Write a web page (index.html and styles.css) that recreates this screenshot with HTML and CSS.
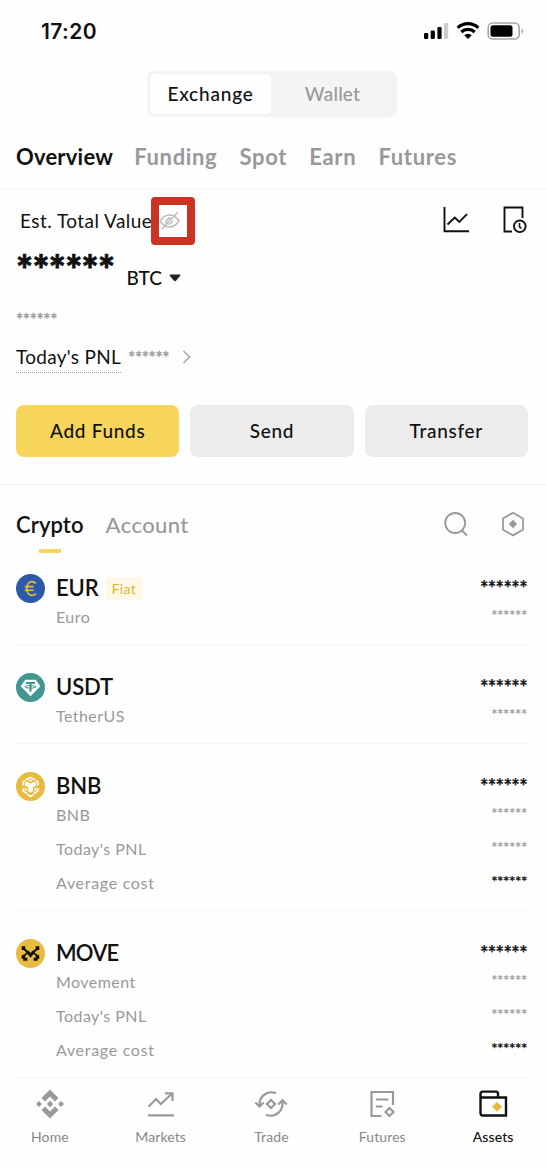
FILE: index.html
```html
<!DOCTYPE html>
<html lang="en">
<head>
<meta charset="utf-8">
<title>Assets</title>
<link rel="stylesheet" href="styles.css">
</head>
<body>
<div class="app">
  <header class="status">
    <span class="time">17:20</span>
    <svg class="status-icons" width="102" height="22" viewBox="0 0 102 22">
      <rect x="2" y="13" width="4.200" height="6" rx="1.200"/><rect x="8.700" y="10.500" width="4.200" height="8.500" rx="1.200"/><rect x="15.400" y="7" width="4.200" height="12" rx="1.200"/><rect x="22" y="3" width="4.200" height="16" rx="1.200" fill="#ccc"/>
      <path d="M35.700 7.800a15 15 0 0 1 20.600 0M39.300 12a9.800 9.800 0 0 1 13.400 0" fill="none" stroke="#000" stroke-width="3.200"/>
      <path d="M42.200 15.300a5.500 5.500 0 0 1 7.600 0L46 19z"/>
      <rect x="66.200" y="3" width="31" height="16" rx="4.500" fill="none" stroke="#a6a6a6" stroke-width="1.600"/>
      <rect x="68.500" y="5.300" width="22" height="11.500" rx="2.500"/><path d="M99.500 8.300q3.500 2.800 0 5.600z" fill="#a6a6a6"/>
    </svg>
  </header>

  <div class="segment">
    <span class="seg active">Exchange</span>
    <span class="seg wallet">Wallet</span>
  </div>

  <nav class="tabs">
    <span class="tab active">Overview</span>
    <span class="tab">Funding</span>
    <span class="tab">Spot</span>
    <span class="tab">Earn</span>
    <span class="tab">Futures</span>
  </nav>

  <section class="summary">
    <div class="est">
      <span class="est-label">Est. Total Value</span>
      <span class="eye"><svg width="22" height="20" viewBox="0 0 22 20" fill="none" stroke="#bcbcbc" stroke-width="1.500"><path d="M1 10Q5 4 10.500 4T20 10Q16 16 10.500 16T1 10zM3 18 18.500 1.500M7 12.500Q7 7.500 12 7M13.500 9.500q-.5 3.500-4 3.500"/></svg></span>
      <span class="tools">
        <svg width="28" height="28" viewBox="0 0 28 28" fill="none" stroke="#111" stroke-width="1.900"><path d="M2.500 1v24.300H27M5.500 18.500l7.300-7 4.500 4.500 7.700-7.800"/></svg>
        <svg width="26" height="28" viewBox="0 0 26 28" fill="none" stroke="#111" stroke-width="1.900"><path d="M10 25.500H2.500V1.500H20.500v10.500"/><circle cx="17.800" cy="20.300" r="5.800"/><path d="M17.500 17v3.800l2 1.500" stroke-width="1.600"/></svg>
      </span>
    </div>
    <div class="balance">
      <span class="stars xl">******</span>
      <span class="btc">BTC</span>
      <svg width="12" height="8" viewBox="0 0 12 8"><path d="M1 .5h10q.7.500.2 1.200L7 6.800q-1 .9-2 0L.8 1.700Q.3 1 1 .5z" fill="#222"/></svg>
    </div>
    <div class="fiat-line"><span class="stars md">******</span></div>
    <div class="pnl">
      <span class="pnl-label">Today's PNL</span>
      <span class="stars md">******</span>
      <svg width="10" height="14" viewBox="0 0 10 14" fill="none" stroke="#aaa" stroke-width="1.700"><path d="m1.500 1 6 6-6 6"/></svg>
    </div>
    <div class="actions">
      <button class="btn primary">Add Funds</button>
      <button class="btn">Send</button>
      <button class="btn">Transfer</button>
    </div>
  </section>

  <section class="list-head">
    <span class="lt active">Crypto</span>
    <span class="lt account">Account</span>
    <span class="list-tools">
      <svg width="26" height="26" viewBox="0 0 26 26" fill="none" stroke="#999" stroke-width="1.800"><circle cx="12.200" cy="12" r="10"/><path d="m18.500 19 5.500 5.500"/></svg>
      <svg width="26" height="26" viewBox="0 0 26 26" fill="none" stroke="#999" stroke-width="1.800"><path d="m13 1.800 10 5.700v11.200l-10 5.700-10-5.700V7.500z"/><path d="m13 8.800 4.200 4.200-4.200 4.200L8.800 13z" fill="#999" stroke="none"/></svg>
    </span>
  </section>

  <main class="coins">
    <article class="coin">
      <svg class="logo" width="29" height="29" viewBox="0 0 28 28"><circle cx="14" cy="14" r="14" fill="#2d5aa8"/><path d="M19.300 9C15 5.500 10.500 8 10.500 14s4.500 8.500 8.800 5M8.500 12.200h8.500M8.500 15.700h8.500" fill="none" stroke="#e9b93c" stroke-width="1.600"/></svg>
      <div class="rows">
        <div class="row name"><span>EUR</span><span class="tag">Fiat</span><span class="stars lg">******</span></div>
        <div class="row sub"><span>Euro</span><span class="stars sm">******</span></div>
      </div>
    </article>
    <article class="coin">
      <svg class="logo" width="29" height="29" viewBox="0 0 28 28"><circle cx="14" cy="14" r="14" fill="#429692"/><path d="M9 6.500h10l4.500 6.300L14 22.500 4.500 12.800z" fill="#fff"/><path d="M9.500 9.700h9M14 9.500v8.500" stroke="#429692" stroke-width="2"/><ellipse cx="14" cy="13.300" rx="5" ry="1.200" fill="none" stroke="#429692"/></svg>
      <div class="rows">
        <div class="row name"><span>USDT</span><span class="stars lg">******</span></div>
        <div class="row sub"><span>TetherUS</span><span class="stars sm">******</span></div>
      </div>
    </article>
    <article class="coin">
      <svg class="logo" width="29" height="29" viewBox="0 0 28 28"><circle cx="14" cy="14" r="14" fill="#e8ba40"/><path d="m9.500 7.700 4.500-2.500 4.500 2.500M7 13V9.500l2-1M21 13V9.500l-2-1M7 15.500v3l4 2.500M21 15.500v3L17 21M11 22l3 1.500 3-1.500" fill="none" stroke="#fff" stroke-width="1.600"/><path d="m8.500 10.500 2.200-1.200L14 11l3.300-1.700 2.200 1.200v2.300L16.300 15v3.700L14 20l-2.300-1.300V15l-3.200-2.200zM12 8.300l2-1.100 2 1.100-2 1.100zM8.500 15l1.700 1v2.500l-1.700-1zM19.500 15l-1.700 1v2.500l1.700-1z" fill="#fff"/></svg>
      <div class="rows">
        <div class="row name"><span>BNB</span><span class="stars lg">******</span></div>
        <div class="row sub"><span>BNB</span><span class="stars sm">******</span></div>
        <div class="row extra"><span>Today's PNL</span><span class="stars sm">******</span></div>
        <div class="row extra"><span class="cost">Average cost</span><span class="stars sm dark">******</span></div>
      </div>
    </article>
    <article class="coin">
      <svg class="logo" width="29" height="29" viewBox="0 0 28 28"><circle cx="14" cy="14" r="14" fill="#e8ba40"/><path d="M5.500 7H9v2.300l2.200 2h1L14 13.500l1.800-2.200h1l2.200-2V7h3.500v3.500h-2L18 13l1.500 1.500 3 1.500v3H21v2h-4v-3h2v-2l-2-1.500-3 3.500-3-3.500L9 16v2h2v3H7v-2H5.500v-3l3-1.500L10 13l-2.500-2.500h-2z" fill="#111"/></svg>
      <div class="rows">
        <div class="row name move"><span>MOVE</span><span class="stars lg">******</span></div>
        <div class="row sub"><span>Movement</span><span class="stars sm">******</span></div>
        <div class="row extra"><span>Today's PNL</span><span class="stars sm">******</span></div>
        <div class="row extra"><span class="cost">Average cost</span><span class="stars sm dark">******</span></div>
      </div>
    </article>
  </main>

  <footer class="nav">
    <span class="item">
      <svg width="30" height="30" viewBox="0 0 30 30" fill="#999"><path d="m15 .5 8.500 8.500-3.500 3.500-5-5-5 5L6.500 9zM15 29.500l8.500-8.500-3.500-3.500-5 5-5-5L6.500 21zM15 11.800l3.200 3.200-3.200 3.200-3.200-3.200zM4 12l3 3-3 3-3-3zM26 12l3 3-3 3-3-3z"/></svg>
      <span class="cap">Home</span>
    </span>
    <span class="item">
      <svg width="30" height="30" viewBox="0 0 30 30" fill="none" stroke="#999" stroke-width="2.200"><path d="m2.500 17.500 7.700-7.500 4.500 5L26 4.800M19 4.300h7.500V12M2 26.300h26"/></svg>
      <span class="cap">Markets</span>
    </span>
    <span class="item">
      <svg class="wide" width="34" height="30" viewBox="0 0 34 30" fill="none" stroke="#999" stroke-width="2.200"><path d="M22 4.200A12 12 0 0 0 5.500 15v2.500M1.300 13.500l4.200 4 4.200-4M12 25.800A12 12 0 0 0 28.500 15v-3M24.300 15.500l4.200-4.200 4.200 4.200M17 11l4 4-4 4-4-4z"/></svg>
      <span class="cap">Trade</span>
    </span>
    <span class="item">
      <svg width="30" height="30" viewBox="0 0 30 30" fill="none" stroke="#999" stroke-width="2.200"><path d="M14.500 27H4.500V3H26v13M9 10.500h12.500M9 17.500h6.500M22.500 19l4 4-4 4-4-4z"/></svg>
      <span class="cap">Futures</span>
    </span>
    <span class="item on">
      <svg width="30" height="30" viewBox="0 0 30 30" fill="none" stroke="#111" stroke-width="2.400"><path d="M20 8V4.500Q20 2.600 18 2.600H5Q2.500 2.600 2.500 5v19q0 2.500 2.500 2.500h23V8.500H5Q2.500 8.500 2.500 6"/><path d="m19 12.700 5 5-5 5-5-5z" fill="#eabb3b" stroke="none"/></svg>
      <span class="cap">Assets</span>
    </span>
  </footer>
</div>
</body>
</html>
```
FILE: styles.css
```css
* { box-sizing: border-box; }
body { margin: 0; background: #fefefe; font-family: Lato, "Liberation Sans", sans-serif; color: #111; }
.app { width: 546px; height: 1168px; overflow: hidden; }
svg { display: block; flex: none; }
span { white-space: nowrap; }

.status { display: flex; justify-content: space-between; align-items: center; height: 62px; padding: 0 22px 0 41px; }
.time { font: 600 21px Inter, sans-serif; letter-spacing: .4px; }

.segment { display: flex; width: 250px; height: 46px; margin: 9px 0 0 147px; padding: 3px; border-radius: 7px; background: #f4f4f4; font-size: 19px; font-weight: 500; color: #999; }
.seg { flex: 1; display: flex; align-items: center; justify-content: center; padding-bottom: 1px; letter-spacing: .2px; }
.seg.active { flex: 0 0 121px; border-radius: 5px; background: #fefefe; color: #111; letter-spacing: .8px; }

.tabs { display: flex; align-items: center; gap: 22.200px; height: 72px; padding: 7px 16px 0; border-bottom: 1px solid #f4f4f4; font-size: 22px; font-weight: 700; color: #999; letter-spacing: .65px; }
.tab.active { margin-right: -1px; color: #111; letter-spacing: .2px; }

.summary { height: 296px; padding: 8px 18px 0 16px; border-bottom: 1px solid #f1f1f1; }
.est { display: flex; align-items: center; height: 48px; }
.est-label { width: 131px; margin-left: 4px; padding-bottom: 2px; font-size: 19px; letter-spacing: .45px; }
.eye { display: flex; align-items: center; width: 44px; height: 48px; border: 8px solid #cb3323; border-radius: 4px; }
.tools { display: flex; gap: 32px; margin: 0 0 2px auto; }
.balance { display: flex; align-items: center; height: 66px; }
.btc { margin: 0 7px 2px 12px; font-size: 19px; font-weight: 500; }
.fiat-line { display: flex; align-items: center; height: 12px; padding-top: 4px; }
.pnl { display: flex; align-items: center; height: 66px; padding-top: 2px; }
.pnl-label { margin-right: 7px; border-bottom: 1px dotted #999; font-size: 19px; line-height: 30px; letter-spacing: .3px; }
.pnl svg { margin-left: 13px; }
.actions { display: grid; grid-template-columns: repeat(3, 1fr); gap: 11px; margin-top: 16px; }
.btn { height: 52px; padding: 0 0 2px; border: 0; border-radius: 8px; background: #ececec; font: 500 19px Lato, sans-serif; letter-spacing: .7px; color: #111; }
.btn.primary { background: #f6d55a; }

.list-head { display: flex; align-items: center; gap: 22px; height: 61px; padding: 17px 20px 0 16px; font-size: 22px; color: #999; font-weight: 500; }
.lt { position: relative; font-weight: 600; }
.account { letter-spacing: .4px; font-weight: 500; }
.lt.active { color: #111; letter-spacing: .1px; }
.lt.active::after { content: ""; position: absolute; left: 50%; bottom: -15px; width: 22px; height: 4px; margin-left: -11px; border-radius: 1px; background: #f6d55a; }
.list-tools { display: flex; gap: 31px; margin-left: auto; }

.coins { padding: 0 18px 0 16px; }
.coin { display: flex; gap: 11px; padding: 28px 0 12px; border-bottom: 1px solid #f4f4f4; }
.rows { flex: 1; }
.row { display: flex; align-items: center; height: 30px; padding-bottom: 2px; font-size: 16px; letter-spacing: .45px; color: #999; }
.row.name { height: 28px; padding-bottom: 1px; font-size: 22px; font-weight: 600; letter-spacing: -.1px; color: #111; }
.row.move { letter-spacing: -.8px; }
.cost { letter-spacing: .7px; }
.row.extra { height: 34px; }
.sub + .extra { margin-top: 2px; }
.extra:last-child { margin-bottom: -2px; }
.tag { margin: 2px 0 0 7px; padding: 0 6px; border-radius: 2px; background: #fff8e6; font-size: 14px; font-weight: 400; line-height: 23px; letter-spacing: .35px; color: #e2b43c; }

.stars { color: #999; }
.stars.xl { align-self: flex-start; margin-top: 1px; font-size: 40px; line-height: 48px; font-weight: 900; letter-spacing: -.6px; color: #111; -webkit-text-stroke: .8px #111; }
.stars.md { font-size: 17px; letter-spacing: -.4px; -webkit-text-stroke: .4px #999; }
.row .stars { margin: 0 1px 2px auto; }
.row .stars.lg { margin-bottom: 0; font-size: 20px; font-weight: 700; letter-spacing: -.65px; color: #111; -webkit-text-stroke: .2px #111; }
.row .stars.sm { font-size: 15px; letter-spacing: -.4px; -webkit-text-stroke: .2px #999; }
.row .stars.dark { color: #111; font-weight: 700; -webkit-text-stroke: .1px #111; }

.nav { display: flex; margin-left: -5.500px; }
.item { flex: none; width: 110.800px; display: flex; flex-direction: column; align-items: center; padding-top: 11px; color: #888; }
.cap { margin-top: 8px; font-size: 14px; line-height: 20px; letter-spacing: .1px; }
.item.on { color: #111; font-weight: 500; }
```
